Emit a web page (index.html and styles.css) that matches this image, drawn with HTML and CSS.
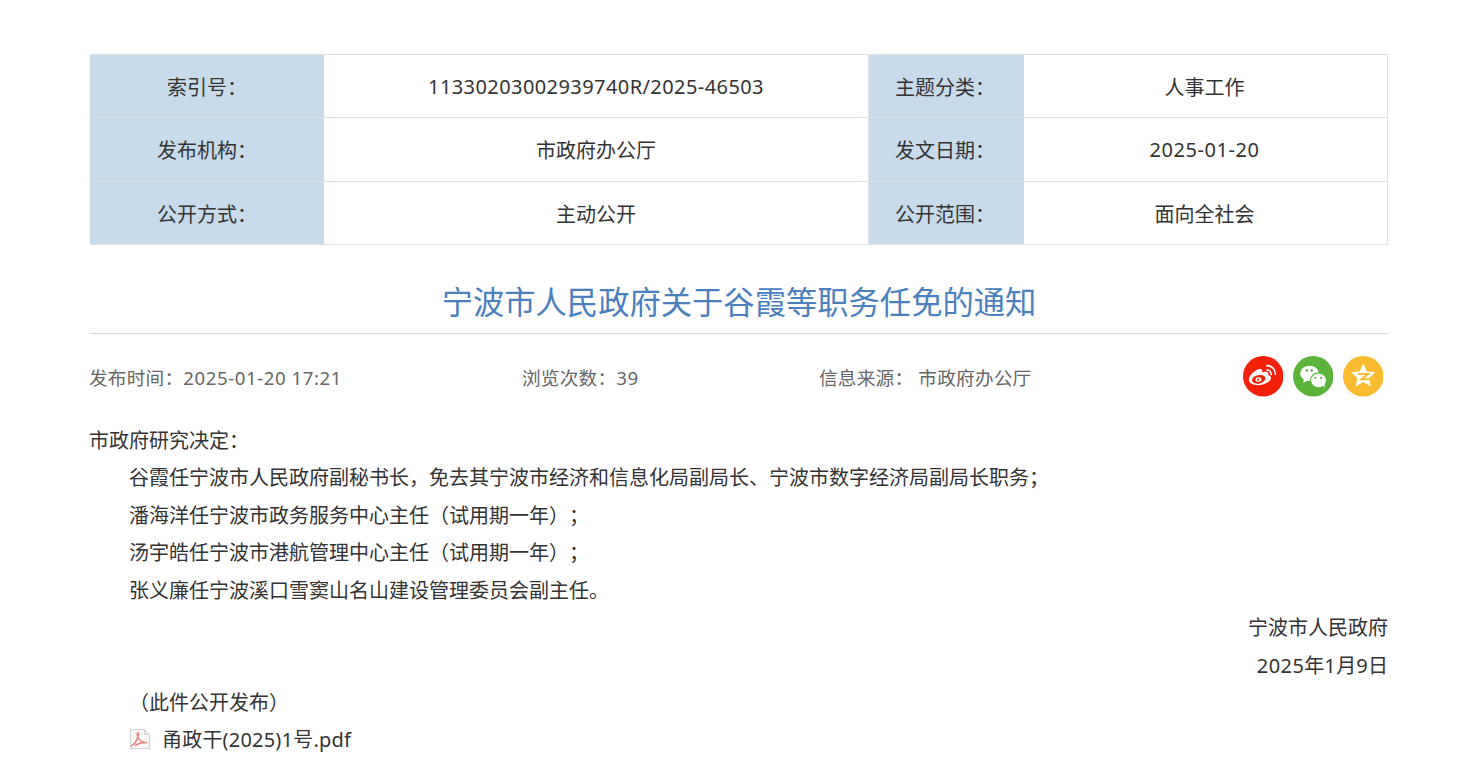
FILE: index.html
```html
<!DOCTYPE html>
<html lang="zh-CN">
<head>
<meta charset="utf-8">
<title>宁波市人民政府关于谷霞等职务任免的通知</title>
<link rel="stylesheet" href="styles.css">
</head>
<body>
<main class="page">
  <table class="info">
    <colgroup><col class="c1"><col class="c2"><col class="c3"><col class="c4"></colgroup>
    <tr><th>索引号：</th><td><span class="num">11330203002939740R/2025-46503</span></td><th class="shift">主题分类：</th><td class="shift">人事工作</td></tr>
    <tr><th>发布机构：</th><td>市政府办公厅</td><th class="shift">发文日期：</th><td class="shift"><span class="num-m">2025-01-20</span></td></tr>
    <tr class="last"><th>公开方式：</th><td>主动公开</td><th class="shift">公开范围：</th><td class="shift">面向全社会</td></tr>
  </table>
  <h1 class="title">宁波市人民政府关于谷霞等职务任免的通知</h1>
  <div class="meta">
    <span class="m-time">发布时间：<span class="num-m">2025-01-20 17:21</span></span>
    <span class="m-views">浏览次数：<span class="num-m">39</span></span>
    <span class="m-src">信息来源：&nbsp;市政府办公厅</span>
    <div class="share">
      <svg class="ic" viewBox="0 0 40 40"><circle cx="20" cy="20" r="20" fill="#f4210a"/><path d="M14.500 28.800C9.500 28.800 5.800 26.600 5.800 23.200c0-3.900 6-9.600 10.500-10.400 2.800-.4 3.200 1.500 2.500 3.300 2.600-.9 6.300-1.200 6.300 1.300 0 .5-.1 1-.4 1.400 1.900.5 3 1.600 3 3C27.700 25.200 21 28.800 14.500 28.800z" fill="#fff"/><ellipse cx="15.500" cy="23" rx="6.700" ry="4.200" transform="rotate(-12 15.500 23)" fill="#f4210a"/><ellipse cx="15.200" cy="23.200" rx="2.900" ry="2.200" fill="#fff"/><circle cx="15" cy="23.400" r="1.100" fill="#f4210a"/><path d="M23.500 13.800a4 4 0 0 1 4.300 4.400M23.500 9.500a8.300 8.300 0 0 1 8.500 8.700" fill="none" stroke="#fff" stroke-width="1.500" stroke-linecap="round"/></svg>
      <svg class="ic" viewBox="0 0 40 40"><circle cx="20" cy="20" r="20" fill="#5bb33a"/><ellipse cx="16.300" cy="17.200" rx="9.300" ry="7.600" fill="#fff"/><path d="M11 22l-1 4.500 5-2.500z" fill="#fff"/><ellipse cx="25.200" cy="24" rx="8.300" ry="8" fill="#5bb33a"/><ellipse cx="25.200" cy="24" rx="7.300" ry="6.800" fill="#fff"/><path d="M29 28l2.500 3.500-.5-5z" fill="#fff"/><circle cx="13.700" cy="14.300" r="1.200" fill="#5bb33a"/><circle cx="18.500" cy="14.300" r="1.200" fill="#5bb33a"/><circle cx="22" cy="21.500" r="1.100" fill="#5bb33a"/><circle cx="27.800" cy="21.500" r="1.100" fill="#5bb33a"/></svg>
      <svg class="ic" viewBox="0 0 40 40"><circle cx="20" cy="20" r="20" fill="#f8bb2f"/><path d="M20 7.500l3.600 7.700 8.400.9-6.200 5.700 1.700 8.200-7.500-4.200-7.500 4.200 1.700-8.200L8 16.100l8.400-.9z" fill="#fff"/><path d="M15 17.700h10l-7 5.300h8" fill="none" stroke="#f8bb2f" stroke-width="1.900"/></svg>
    </div>
  </div>
  <article class="content">
    <p>市政府研究决定：</p>
    <p class="ind">谷霞任宁波市人民政府副秘书长，免去其宁波市经济和信息化局副局长、宁波市数字经济局副局长职务；</p>
    <p class="ind">潘海洋任宁波市政务服务中心主任（试用期一年）；</p>
    <p class="ind">汤宇皓任宁波市港航管理中心主任（试用期一年）；</p>
    <p class="ind">张义廉任宁波溪口雪窦山名山建设管理委员会副主任。</p>
    <p class="right">宁波市人民政府</p>
    <p class="right"><span class="num">2025</span>年<span class="num">1</span>月<span class="num">9</span>日</p>
    <p class="ind">（此件公开发布）</p>
    <p class="file">
      <svg class="pdf" viewBox="0 0 20 20"><path d="M.5.500h14l5 5v14H.5z" fill="#f7f5f5" stroke="#d5d3d3"/><path d="M14.500.500v5h5" fill="#e8e6e6" stroke="#d5d3d3"/><path d="M1 17c3-1 6-5 7.500-11.500.5-2.500-1.500-2-1.200.5.500 3.500 3.500 7 9.700 8M17 13.800c-4-.8-8 .5-12 2.700" fill="none" stroke="#e8837f" stroke-width="1.500"/></svg>
      <span class="name">甬政干(2025)1号.pdf</span>
    </p>
  </article>
</main>
</body>
</html>
```
FILE: styles.css
```css
* { box-sizing: border-box; }
html, body { margin: 0; padding: 0; background: #fff; }
body {
  font-family: "Noto Sans", "Noto Sans CJK SC", sans-serif;
  color: #333;
  text-spacing-trim: space-all;
}
.page { width: 1298px; margin-left: 90px; padding-top: 54px; }
.num { letter-spacing: .42px; }
.num-m { letter-spacing: .55px; }
.name { letter-spacing: .2px; }
.info {
  width: 1298px;
  border-collapse: collapse;
  table-layout: fixed;
  font-size: 20px;
}
.c1 { width: 233px; }
.c2 { width: 545px; }
.c3 { width: 155px; }
.info tr { height: 63.4px; }
.info th, .info td {
  border: 1px solid #e0e0e0;
  text-align: center;
  font-weight: 400;
  padding: 0;
  color: #333;
}
.info th { background: #c7dbec; border-left-color: #c7dbec; border-right-color: #c7dbec; }
.info .shift { padding-right: 2px; }
.info .last th, .info .last td { padding-top: 2px; }
.title {
  margin: 0;
  height: 88.500px;
  line-height: 114px;
  border-bottom: 1px solid #d8d8d8;
  text-align: center;
  font-size: 31.3px;
  font-weight: 400;
  color: #4a80bd;
  white-space: nowrap;
}
.meta {
  display: flex;
  align-items: center;
  height: 85.500px;
  font-size: 18.67px;
  letter-spacing: .2px;
  color: #666;
}
.m-time { width: 433px; margin-left: -1px; }
.m-views { width: 297px; }
.m-src { flex: 1; }
.share { display: flex; gap: 9.500px; margin-right: 4.700px; }
.ic { width: 40.500px; height: 40.500px; display: block; }
.content { font-size: 20px; line-height: 37.5px; color: #333; padding-top: 2.500px; margin-left: -1px; }
.content p { margin: 0; }
.ind { text-indent: 40px; }
.right { text-align: right; }
.content .file { display: flex; align-items: center; gap: 12px; padding-left: 41px; margin-top: -1px; }
.pdf { width: 20px; height: 20px; display: block; }
```
